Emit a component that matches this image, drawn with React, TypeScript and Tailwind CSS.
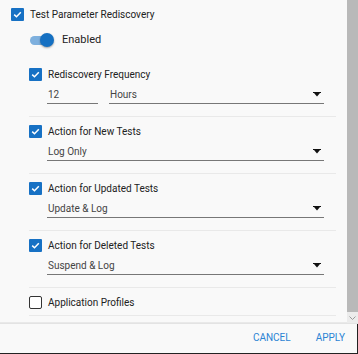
import React from "react";

const Check = ({ on = true }: { on?: boolean }) =>
  on ? (
    <div className="w-[13px] h-[13px] bg-[#1771c4] rounded-[1px] flex items-center justify-center shrink-0">
      <svg width="9" height="9" viewBox="0 0 9 9">
        <polyline points="1.2,4.6 3.5,6.8 7.8,2.2" fill="none" stroke="white" strokeWidth="1.5" />
      </svg>
    </div>
  ) : (
    <div className="w-[13px] h-[13px] border border-[#333] rounded-[2px] shrink-0 bg-white" />
  );

const Arrow = () => (
  <svg width="8" height="5" viewBox="0 0 8 5" className="shrink-0">
    <rect x="0" y="0" width="8" height="1" fill="#111" />
    <polygon points="1,1 7,1 4,4.5" fill="#111" />
  </svg>
);

const Select = ({ value, className = "" }: { value: string; className?: string }) => (
  <div className={`h-[18px] border-b border-[#777] flex items-center justify-between pr-[3px] ${className}`}>
    <span className="pl-[1px]">{value}</span>
    <Arrow />
  </div>
);

const Group = ({ title, value }: { title: string; value: string }) => (
  <div>
    <div className="mt-[7px] h-[14px] flex items-center gap-[6px]">
      <Check />
      <span className="text-[#222]">{title}</span>
    </div>
    <div className="mt-[5px] ml-[18px] mr-[12px] text-[#444]">
      <Select value={value} />
    </div>
    <div className="mt-[12px] h-px bg-[#e9e9e9]" />
  </div>
);

export default function App() {
  return (
    <div
      className="w-[358px] h-[354px] bg-[#f9f9f9] flex flex-col text-[10px] overflow-hidden"
      style={{ fontFamily: "Roboto, 'Noto Sans', sans-serif" }}
    >
      <div className="h-[324px] flex border-b border-[#e3e3e3]">
        <div className="flex-1 flex flex-col border-b border-[#e9e9e9] h-[323px]">
          <div className="mt-[7px] ml-[11px] h-[14px] flex items-center gap-[6px]">
            <Check />
            <span className="text-[#222]">Test Parameter Rediscovery</span>
          </div>
          <div className="mt-[12px] ml-[30px] h-[14px] flex items-center gap-[8px]">
            <div className="relative w-[24px] h-[14px]">
              <div className="absolute left-0 top-[2.5px] w-[22px] h-[9px] rounded-full bg-[#7eb0de]" />
              <div className="absolute right-0 top-0 w-[14px] h-[14px] rounded-full bg-[#1570c2] shadow-[0_1px_2px_rgba(0,0,0,0.35)]" />
            </div>
            <span className="text-[11px] text-[#222]">Enabled</span>
          </div>
          <div className="ml-[29px] mr-[11px] mt-[13px]">
            <div className="mt-[7px] h-[14px] flex items-center gap-[6px]">
              <Check />
              <span className="text-[#222]">Rediscovery Frequency</span>
            </div>
            <div className="mt-[5px] ml-[18px] mr-[12px] flex gap-[11px] text-[#444]">
              <div className="w-[51px] h-[18px] border-b border-[#777] flex items-center pl-[1px]">12</div>
              <Select value="Hours" className="flex-1" />
            </div>
            <div className="mt-[12px] h-px bg-[#e9e9e9]" />
            <Group title="Action for New Tests" value="Log Only" />
            <Group title="Action for Updated Tests" value="Update & Log" />
            <Group title="Action for Deleted Tests" value="Suspend & Log" />
            <div className="mt-[7px] h-[14px] flex items-center gap-[6px]">
              <Check on={false} />
              <span className="text-[#222]">Application Profiles</span>
            </div>
            <div className="mt-[6px] h-px bg-[#e9e9e9]" />
          </div>
        </div>
        <div className="w-[11px] flex flex-col">
          <div className="flex-1 bg-[#b9b9b9]" />
          <div className="h-[11px] bg-[#ececec] flex items-center justify-center">
            <svg width="7" height="4" viewBox="0 0 7 4">
              <polyline points="0.5,0.5 3.5,3.5 6.5,0.5" fill="none" stroke="#9a9a9a" strokeWidth="1" />
            </svg>
          </div>
        </div>
      </div>
      <div className="flex-1 flex items-center justify-end gap-[25px] pr-[12px] pb-[2px] border-b border-r border-[#222] text-[10px] text-[#2b84d4]">
        <span>CANCEL</span>
        <span>APPLY</span>
      </div>
    </div>
  );
}
